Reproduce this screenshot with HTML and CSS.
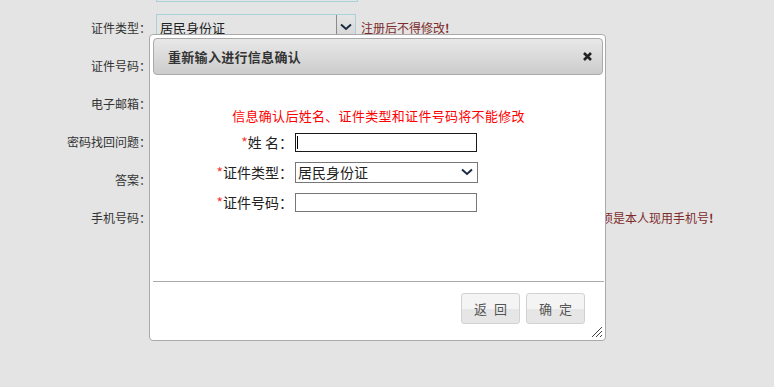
FILE: index.html
```html
<!DOCTYPE html>
<html lang="zh-CN">
<head>
<meta charset="UTF-8">
<title>重新输入进行信息确认</title>
<link rel="stylesheet" href="styles.css">
</head>
<body>
<div class="reg-form">
    <div class="reg-row">
        <label></label>
        <div class="reg-input"></div>
    </div>
    <div class="reg-row">
        <label>证件类型：</label>
        <div class="reg-select">
            <span>居民身份证</span>
            <span class="reg-arrow">
                <svg width="12" height="8" viewBox="0 0 12 8"><path d="M1 1.5 L6 6 L11 1.5" fill="none" stroke="#1a2a44" stroke-width="2"/></svg>
            </span>
        </div>
        <span class="hint">注册后不得修改<b>!</b></span>
    </div>
    <div class="reg-row">
        <label>证件号码：</label>
    </div>
    <div class="reg-row">
        <label>电子邮箱：</label>
    </div>
    <div class="reg-row">
        <label>密码找回问题：</label>
    </div>
    <div class="reg-row">
        <label>答案：</label>
    </div>
    <div class="reg-row">
        <label>手机号码：</label>
        <div class="reg-spacer"></div>
        <span class="hint">用于接收验证短信和找回密码，该手机号码必须是本人现用手机号<b>!</b></span>
    </div>
</div>

<div class="dialog">
    <div class="dialog-title">
        <span>重新输入进行信息确认</span>
        <svg class="dialog-close" width="9" height="9" viewBox="0 0 9 9"><path d="M1 1 L8 8 M8 1 L1 8" stroke="#222" stroke-width="2.6"/></svg>
    </div>
    <div class="dialog-content">
        <p class="notice">信息确认后姓名、证件类型和证件号码将不能修改</p>
        <div class="form-row">
            <label><em>*</em>姓&nbsp;名：</label>
            <div class="text-box focused"><i class="caret"></i></div>
        </div>
        <div class="form-row">
            <label><em>*</em>证件类型：</label>
            <div class="select-box">
                <span>居民身份证</span>
                <svg width="12" height="8" viewBox="0 0 12 8"><path d="M1 1.5 L6 6 L11 1.5" fill="none" stroke="#1a2a44" stroke-width="2"/></svg>
            </div>
        </div>
        <div class="form-row">
            <label><em>*</em>证件号码：</label>
            <div class="text-box"></div>
        </div>
    </div>
    <div class="dialog-buttons">
        <button>返回</button>
        <button>确定</button>
    </div>
    <svg class="resize" width="12" height="12" viewBox="0 0 12 12">
        <path d="M1 11 L11 1 M5 11 L11 5 M9 11 L11 9" stroke="#444" stroke-width="1"/>
    </svg>
</div>
</body>
</html>
```

FILE: styles.css
```css
body {
    margin: 0;
    height: 387px;
    overflow: hidden;
    background-color: #e4e4e4;
    font-family: "Noto Sans CJK SC", "Liberation Sans", sans-serif;
    font-size: 12px;
    color: #333;
}
.reg-form {
    margin-top: -30px;
}
.reg-row {
    display: flex;
    align-items: center;
    height: 38px;
}
.reg-row label {
    width: 151px;
    text-align: right;
    margin-right: 5px;
}
.reg-input {
    width: 200px;
    height: 24px;
    border: 1px solid #a9d1dc;
}
.reg-select {
    display: flex;
    align-items: center;
    justify-content: space-between;
    box-sizing: border-box;
    width: 200px;
    height: 26px;
    border: 1px solid #a9d1dc;
    font-size: 13px;
    color: #222;
}
.reg-select span:first-child {
    padding-left: 3px;
}
.reg-arrow {
    display: flex;
    align-items: center;
    justify-content: center;
    width: 18px;
    height: 24px;
    border-left: 1px solid #8a8a8a;
    background: linear-gradient(#e6e6e6, #d4d4d4);
}
.reg-spacer {
    width: 200px;
    flex-shrink: 0;
}
.hint {
    margin-left: 5px;
    color: #7d2b2b;
    white-space: nowrap;
}

/* dialog */
.dialog {
    position: absolute;
    left: 149px;
    top: 34px;
    width: 457px;
    height: 307px;
    box-sizing: border-box;
    padding: 3px 1px 0 3px;
    display: flex;
    flex-direction: column;
    background: #fff;
    border: 1px solid #aaa;
    border-radius: 4px;
}
.dialog-title {
    display: flex;
    align-items: center;
    justify-content: space-between;
    height: 35px;
    padding: 0 10px 0 14px;
    margin-right: 1px;
    border: 1px solid #aaa;
    border-radius: 4px;
    background: linear-gradient(#e8e8e8, #cccccc);
    font-size: 13px;
    font-weight: bold;
    letter-spacing: 0.3px;
    color: #333;
}
.dialog-content {
    height: 206px;
    padding-top: 32px;
    box-sizing: border-box;
}
.notice {
    margin: 0 0 2px;
    text-align: center;
    color: #f00;
    font-size: 13px;
    letter-spacing: 0.3px;
    line-height: 18px;
}
.form-row {
    display: flex;
    align-items: center;
    height: 30px;
    font-size: 14px;
    color: #222;
}
.form-row label {
    width: 140px;
    margin-right: 2px;
    text-align: right;
}
.form-row em {
    font-style: normal;
    color: #f33;
}
.text-box {
    box-sizing: border-box;
    width: 182px;
    height: 19px;
    border: 1px solid #777;
    background: #fff;
}
.text-box.focused {
    border-color: #1a1a1a;
    padding: 2px 0 0 1px;
}
.caret {
    display: block;
    width: 1px;
    height: 13px;
    background: #000;
}
.select-box {
    display: flex;
    align-items: center;
    justify-content: space-between;
    box-sizing: border-box;
    width: 183px;
    height: 21px;
    padding: 0 4px 0 2px;
    border: 1px solid #777;
    font-size: 14px;
}
.dialog-buttons {
    display: flex;
    justify-content: flex-end;
    gap: 6px;
    height: 58px;
    box-sizing: border-box;
    padding: 11px 19px 0 0;
    border-top: 1px solid #aaa;
}
.dialog-buttons button {
    width: 59px;
    height: 31px;
    padding: 0 0 0 7px;
    border: 1px solid #d2d2d2;
    border-radius: 3px;
    background: linear-gradient(#f4f4f4 50%, #e6e6e6 50%);
    font-family: inherit;
    font-size: 13px;
    letter-spacing: 7px;
    color: #555;
}
.resize {
    position: absolute;
    right: 2px;
    bottom: 2px;
}
```
